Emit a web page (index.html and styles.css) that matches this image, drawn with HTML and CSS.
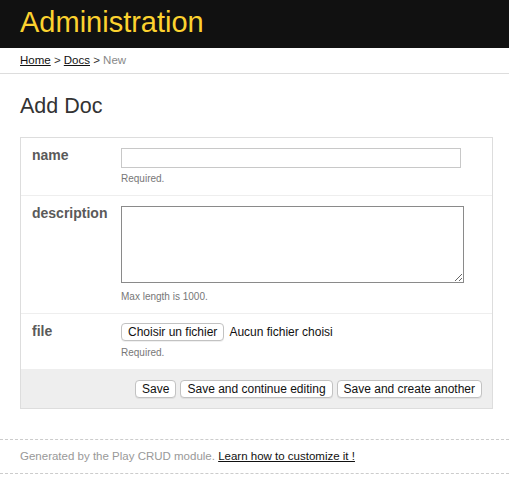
FILE: index.html
```html
<!DOCTYPE html>
<html lang="en">
<head>
<meta charset="utf-8">
<title>Administration</title>
<link rel="stylesheet" href="styles.css">
</head>
<body>
<header class="topbar"><h1 class="brand">Administration</h1></header>
<nav class="crumbs"><a href="#">Home</a> &gt; <a href="#">Docs</a> &gt; <span class="current">New</span></nav>
<main class="content">
  <h2 class="title">Add Doc</h2>
  <form class="crud">
    <div class="field">
      <label class="label">name</label>
      <div class="control">
        <input class="text" type="text">
        <p class="help">Required.</p>
      </div>
    </div>
    <div class="field">
      <label class="label">description</label>
      <div class="control">
        <textarea class="area"></textarea>
        <p class="help help-area">Max length is 1000.</p>
      </div>
    </div>
    <div class="field field-last">
      <label class="label">file</label>
      <div class="control">
        <div class="file"><span class="btn file-btn">Choisir un fichier</span><span class="file-name">Aucun fichier choisi</span></div>
        <p class="help help-file">Required.</p>
      </div>
    </div>
    <div class="actions">
      <button type="button" class="btn">Save</button>
      <button type="button" class="btn">Save and continue editing</button>
      <button type="button" class="btn">Save and create another</button>
    </div>
  </form>
</main>
<footer class="foot">Generated by the Play CRUD module. <a href="#">Learn how to customize it !</a></footer>
</body>
</html>
```
FILE: styles.css
```css
* { box-sizing: border-box; }
html, body { margin: 0; padding: 0; background: #fff; }
body { font-family: "Liberation Sans", Arial, Helvetica, sans-serif; color: #333; }

.topbar { background: #111; height: 48px; padding: 0 20px; }
.brand { margin: 0; font-size: 29px; line-height: 45px; font-weight: normal; color: #fcd22f; }

.crumbs { padding: 5px 20px 5px; font-size: 11.5px; line-height: 15px; color: #333; border-bottom: 1px solid #ddd; }
.crumbs a { color: #111; text-decoration: underline; }
.crumbs .current { color: #888; }

.content { padding: 0 16px 0 20px; }
.title { margin: 19px 0 18px; font-size: 21.5px; line-height: 26px; font-weight: normal; color: #333; }

.crud { border: 1px solid #ddd; }
.field { display: flex; padding: 10px 12px 10px 11px; border-bottom: 1px solid #eee; }
.field-last { border-bottom: none; }
.label { width: 89px; flex: none; font-size: 14px; line-height: 14px; font-weight: bold; color: #5a5a5a; }
.control { flex: 1; }
.text { display: block; width: 340px; height: 20px; margin: 0; padding: 2px 4px; border: 1px solid #c8c8c8; background: #fff; font: 12px "Liberation Sans", Arial, sans-serif; }
.area { display: block; width: 343px; height: 77px; margin: 0; padding: 2px; border: 1px solid #8a8a8a; background: #fff; font: 12px "Liberation Sans", Arial, sans-serif; resize: both; }
.help { margin: 5px 0 0; font-size: 10px; line-height: 12px; color: #777; }
.help-area { margin-top: 8px; }
.help-file { margin-top: 6px; }

.file { display: flex; align-items: center; margin-top: -1px; height: 18px; font-size: 12px; color: #111; }
.file-name { margin-left: 5px; }

.btn { display: inline-flex; align-items: center; justify-content: center; height: 18px; padding: 0 6px; border: 1px solid #c2c2c2; border-radius: 4px; background: #fff; box-shadow: 0 1px 0 rgba(0,0,0,0.06); font: 12px "Liberation Sans", Arial, sans-serif; color: #111; margin: 0; }

.actions { display: flex; justify-content: flex-end; gap: 4px; padding: 11px 10px 10px; background: #eee; }

.foot { margin-top: 30px; padding: 9px 20px; border-top: 1px dashed #ccc; border-bottom: 1px dashed #ccc; font-size: 11.5px; line-height: 15px; color: #999; }
.foot a { color: #111; text-decoration: underline; }
```
